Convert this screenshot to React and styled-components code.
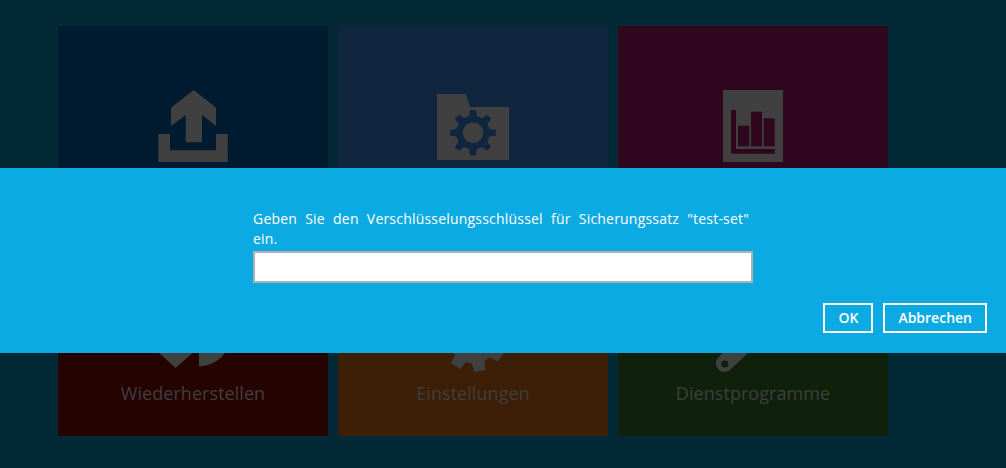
import React from 'react';
import styled, { createGlobalStyle } from 'styled-components';

const GlobalStyle = createGlobalStyle`
  html, body {
    margin: 0;
    padding: 0;
    background: #032836;
    font-family: "Open Sans", "Noto Sans", sans-serif;
  }
`;

const Page = styled.div`
  position: relative;
  width: 1006px;
  height: 468px;
  overflow: hidden;
  padding: 26px 0 0 58px;
  box-sizing: border-box;
`;

const Grid = styled.div`
  display: grid;
  grid-template-columns: repeat(3, 270px);
  grid-auto-rows: 200px;
  gap: 10px;
`;

const Tile = styled.div`
  background: ${(p) => p.$bg};
  padding-top: 60px;
  box-sizing: border-box;
  display: flex;
  flex-direction: column;
  align-items: center;
`;

const TileIcon = styled.svg`
  display: block;
  width: 80px;
  height: 80px;
  overflow: visible;
  fill: #404040;
`;

const TileLabel = styled.div`
  margin-top: 5px;
  font-size: 18px;
  line-height: 24px;
  letter-spacing: 0.05px;
  color: #3f3f3f;
`;

const Dialog = styled.div`
  position: absolute;
  left: 0;
  top: 168px;
  width: 100%;
  height: 185px;
  box-sizing: border-box;
  background: #0caae2;
  padding: 41px 19px 0 253px;
`;

const Prompt = styled.div`
  width: 496px;
  font-size: 14px;
  line-height: 20px;
  letter-spacing: 0.2px;
  word-spacing: 2px;
  color: #fff;
  text-align: justify;
`;

const KeyInput = styled.input`
  display: block;
  width: 500px;
  height: 32px;
  margin-top: 2px;
  box-sizing: border-box;
  border: 2px solid #b0b0b0;
  background: #fff;
  outline: none;
  padding: 0 6px;
`;

const Actions = styled.div`
  display: flex;
  justify-content: flex-end;
  gap: 10px;
  margin-top: 20px;
`;

const Button = styled.button`
  min-width: 50px;
  height: 30px;
  padding: 0 13px;
  box-sizing: border-box;
  border: 2px solid #fff;
  background: transparent;
  color: #fff;
  font-family: inherit;
  font-size: 14px;
  font-weight: 600;
  line-height: 26px;
`;

// 8 teeth gear: r is the tip radius, r0 the root radius, rot the turn in degrees
const gearPath = ({ cx, cy, r, r0, hole = 0, rot = 0, tip = 0.14, base = 0.27 }) => {
  const pts = [];
  for (let i = 0; i < 8; i++) {
    const a = (i * Math.PI) / 4 - Math.PI / 2 + (rot * Math.PI) / 180;
    pts.push([a - base, r0], [a - tip, r], [a + tip, r], [a + base, r0]);
  }
  const d = pts
    .map(([a, rad], i) => `${i ? 'L' : 'M'}${(cx + rad * Math.cos(a)).toFixed(2)} ${(cy + rad * Math.sin(a)).toFixed(2)}`)
    .join(' ');
  if (!hole) return `${d}Z`;
  return `${d}Z M${cx - hole} ${cy}a${hole} ${hole} 0 1 0 ${hole * 2} 0a${hole} ${hole} 0 1 0 ${-hole * 2} 0Z`;
};

const UploadIcon = () => (
  <TileIcon viewBox="0 0 80 80">
    <path d="M40.7 4 L63 21.7 V40 L49 29 V56.3 H32.7 V29 L18 40 V21.7Z" />
    <path d="M5.3 48 H17 V64.3 H63 V48 H74.7 V76 H5.3Z" />
  </TileIcon>
);

const FolderGearIcon = ({ bg }) => (
  <TileIcon viewBox="0 0 80 80">
    <path d="M4 8 H33 L37 21 H76 V74 H4Z" />
    <path
      fill={bg}
      fillRule="evenodd"
      d={gearPath({ cx: 40, cy: 46.7, r: 23, r0: 17, hole: 10.3, tip: 0.13, base: 0.22 })}
    />
  </TileIcon>
);

const ReportIcon = ({ bg }) => (
  <TileIcon viewBox="0 0 80 80">
    <path d="M10 4 H70 V76 H10Z" />
    <g fill={bg}>
      <path d="M18 24 H23 V63 H61.7 V67.7 H18Z" />
      <rect x="25" y="39.7" width="11.3" height="20.6" />
      <rect x="38" y="25.7" width="11" height="34.6" />
      <rect x="50.7" y="32.3" width="11" height="28" />
    </g>
  </TileIcon>
);

const RestoreIcon = () => (
  <TileIcon viewBox="0 0 80 80">
    <path d="M5 56 H40.7 L22.7 72Z" />
    <path d="M46 7.5 A31.5 31.5 0 0 1 46 70.5Z" />
  </TileIcon>
);

const SettingsIcon = () => (
  <TileIcon viewBox="0 0 80 80">
    <path
      fillRule="evenodd"
      d={gearPath({ cx: 40.7, cy: 43, r: 33, r0: 24.5, hole: 12, rot: -11, tip: 0.16, base: 0.27 })}
    />
  </TileIcon>
);

const ToolsIcon = () => (
  <TileIcon viewBox="0 0 80 80">
    <path
      fillRule="evenodd"
      d="M5 62 L30 32 L60 32 L35 57 L18 73 A8.5 8.5 0 0 1 5 62Z M8.3 68 a3.5 3.5 0 1 0 7 0 a3.5 3.5 0 1 0 -7 0Z"
    />
  </TileIcon>
);

const tiles = [
  { bg: '#001b2f', label: 'Sichern', Icon: UploadIcon },
  { bg: '#10263e', label: 'Sicherungssätze', Icon: FolderGearIcon },
  { bg: '#2e061e', label: 'Bericht', Icon: ReportIcon },
  { bg: '#250300', label: 'Wiederherstellen', Icon: RestoreIcon },
  { bg: '#3d1e07', label: 'Einstellungen', Icon: SettingsIcon },
  { bg: '#0f210a', label: 'Dienstprogramme', Icon: ToolsIcon },
];

const App = () => {
  return (
    <>
      <GlobalStyle />
      <Page>
        <Grid>
          {tiles.map(({ bg, label, Icon }) => (
            <Tile key={label} $bg={bg}>
              <Icon bg={bg} />
              <TileLabel>{label}</TileLabel>
            </Tile>
          ))}
        </Grid>
        <Dialog>
          <Prompt>Geben Sie den Verschlüsselungsschlüssel für Sicherungssatz "test-set" ein.</Prompt>
          <KeyInput type="password" />
          <Actions>
            <Button>OK</Button>
            <Button>Abbrechen</Button>
          </Actions>
        </Dialog>
      </Page>
    </>
  );
};

export default App;
